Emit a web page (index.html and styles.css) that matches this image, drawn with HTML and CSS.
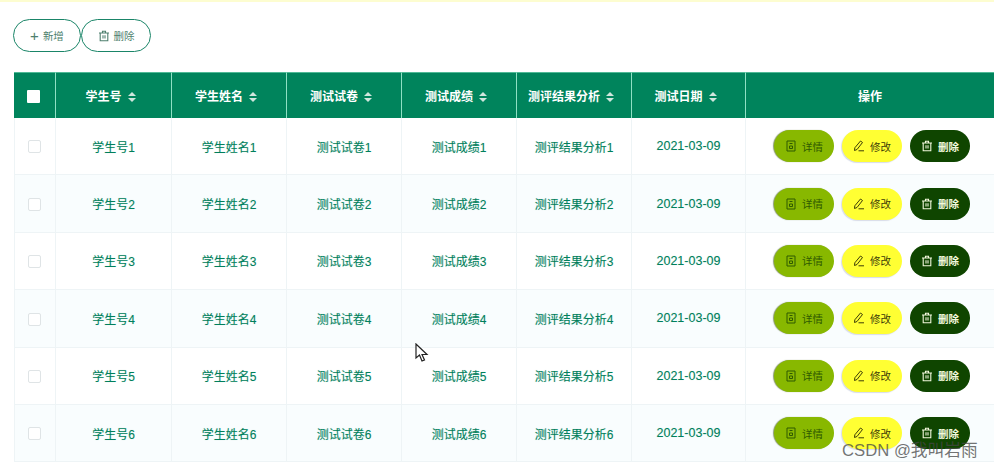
FILE: index.html
```html
<!DOCTYPE html>
<html lang="en">

<head>
    <meta charset="UTF-8">
    <meta name="viewport" content="width=device-width, initial-scale=1.0">
    <title>学生测试</title>
    <link rel="stylesheet" href="styles.css">
</head>

<body>
    <svg class="defs" width="0" height="0">
        <symbol id="i-trash" viewBox="0 0 12 12">
            <path d="M1 3h10M4.500 3V1.200h3V3M2.200 3v7.800h7.600V3M5 5.200v3.200M7 5.200v3.200" fill="none" stroke="currentColor" stroke-width="1.100"/>
        </symbol>
        <symbol id="i-doc" viewBox="0 0 12 12">
            <path d="M2 1h8v10H2zM4.500 3.500h3M4.500 6h3v2.500h-3z" fill="none" stroke="currentColor" stroke-width="1"/>
        </symbol>
        <symbol id="i-edit" viewBox="0 0 12 12">
            <path d="M7.500 1l2 1.500-5.500 7-2.500 1 .3-2.700zM5.500 10.800h5.500" fill="none" stroke="currentColor" stroke-width="1"/>
        </symbol>
    </svg>

    <div class="topline"></div>

    <div class="toolbar">
        <button class="tool-btn add"><span class="plus">+</span>新增</button>
        <button class="tool-btn"><svg class="ico"><use href="#i-trash"/></svg>删除</button>
    </div>

    <table class="list">
        <thead>
            <tr>
                <th class="c-check"><span class="check head"></span></th>
                <th class="c-col c-wide">学生号<i class="sort"></i></th>
                <th class="c-col">学生姓名<i class="sort"></i></th>
                <th class="c-col">测试试卷<i class="sort"></i></th>
                <th class="c-col">测试成绩<i class="sort"></i></th>
                <th class="c-col">测评结果分析<i class="sort"></i></th>
                <th class="c-col c-narrow">测试日期<i class="sort"></i></th>
                <th class="c-ops">操作</th>
            </tr>
        </thead>
        <tbody>
            <tr>
                <td class="c-check"><span class="check"></span></td>
                <td>学生号1</td><td>学生姓名1</td><td>测试试卷1</td><td>测试成绩1</td><td>测评结果分析1</td><td class="date">2021-03-09</td>
                <td><div class="ops">
                    <button class="op detail"><svg class="ico"><use href="#i-doc"/></svg>详情</button>
                    <button class="op edit"><svg class="ico"><use href="#i-edit"/></svg>修改</button>
                    <button class="op del"><svg class="ico"><use href="#i-trash"/></svg>删除</button>
                </div></td>
            </tr>
            <tr>
                <td class="c-check"><span class="check"></span></td>
                <td>学生号2</td><td>学生姓名2</td><td>测试试卷2</td><td>测试成绩2</td><td>测评结果分析2</td><td class="date">2021-03-09</td>
                <td><div class="ops">
                    <button class="op detail"><svg class="ico"><use href="#i-doc"/></svg>详情</button>
                    <button class="op edit"><svg class="ico"><use href="#i-edit"/></svg>修改</button>
                    <button class="op del"><svg class="ico"><use href="#i-trash"/></svg>删除</button>
                </div></td>
            </tr>
            <tr>
                <td class="c-check"><span class="check"></span></td>
                <td>学生号3</td><td>学生姓名3</td><td>测试试卷3</td><td>测试成绩3</td><td>测评结果分析3</td><td class="date">2021-03-09</td>
                <td><div class="ops">
                    <button class="op detail"><svg class="ico"><use href="#i-doc"/></svg>详情</button>
                    <button class="op edit"><svg class="ico"><use href="#i-edit"/></svg>修改</button>
                    <button class="op del"><svg class="ico"><use href="#i-trash"/></svg>删除</button>
                </div></td>
            </tr>
            <tr>
                <td class="c-check"><span class="check"></span></td>
                <td>学生号4</td><td>学生姓名4</td><td>测试试卷4</td><td>测试成绩4</td><td>测评结果分析4</td><td class="date">2021-03-09</td>
                <td><div class="ops">
                    <button class="op detail"><svg class="ico"><use href="#i-doc"/></svg>详情</button>
                    <button class="op edit"><svg class="ico"><use href="#i-edit"/></svg>修改</button>
                    <button class="op del"><svg class="ico"><use href="#i-trash"/></svg>删除</button>
                </div></td>
            </tr>
            <tr>
                <td class="c-check"><span class="check"></span></td>
                <td>学生号5</td><td>学生姓名5</td><td>测试试卷5</td><td>测试成绩5</td><td>测评结果分析5</td><td class="date">2021-03-09</td>
                <td><div class="ops">
                    <button class="op detail"><svg class="ico"><use href="#i-doc"/></svg>详情</button>
                    <button class="op edit"><svg class="ico"><use href="#i-edit"/></svg>修改</button>
                    <button class="op del"><svg class="ico"><use href="#i-trash"/></svg>删除</button>
                </div></td>
            </tr>
            <tr>
                <td class="c-check"><span class="check"></span></td>
                <td>学生号6</td><td>学生姓名6</td><td>测试试卷6</td><td>测试成绩6</td><td>测评结果分析6</td><td class="date">2021-03-09</td>
                <td><div class="ops">
                    <button class="op detail"><svg class="ico"><use href="#i-doc"/></svg>详情</button>
                    <button class="op edit"><svg class="ico"><use href="#i-edit"/></svg>修改</button>
                    <button class="op del"><svg class="ico"><use href="#i-trash"/></svg>删除</button>
                </div></td>
            </tr>
        </tbody>
    </table>

    <!-- mouse pointer and watermark sit on top of the table -->
    <svg class="cursor" width="14" height="20" viewBox="0 0 14 20">
        <path d="M1 1v14l3.500-3 2.500 6 2.500-1-2.500-5.500h5z" fill="#fff" stroke="#222" stroke-width="1.200"/>
    </svg>
    <div class="watermark">CSDN @我叫岩雨</div>
</body>

</html>
```

FILE: styles.css
```css
* {
    margin: 0;
    padding: 0;
    box-sizing: border-box;
}

html,
body {
    height: 469px;
    overflow: hidden;
}

body {
    position: relative;
    background: #fff;
    font-family: "Liberation Sans", "Noto Sans CJK SC", sans-serif;
    font-size: 12px;
    color: #007f5c;
}

button {
    font: inherit;
    cursor: pointer;
}

.defs {
    display: block;
    height: 0;
}

.topline {
    height: 2px;
    background: #fdfdd0;
}

.toolbar {
    display: flex;
    padding: 17px 0 0 13px;
    height: 70px;
}

.tool-btn {
    display: flex;
    align-items: center;
    justify-content: center;
    width: 70px;
    height: 33px;
    border: 1.500px solid #1a8568;
    border-radius: 17px;
    background: #fff;
    color: #4e7f6e;
    font-size: 10.500px;
}

.tool-btn.add {
    width: 68px;
}

.tool-btn .ico {
    margin-right: 4px;
}

.plus {
    margin-right: 4px;
    font-size: 15px;
    line-height: 1;
    font-weight: 300;
}

.ico {
    width: 12px;
    height: 12px;
    margin-right: 5px;
    flex: none;
}

.list {
    margin-left: 14px;
    width: 980px;
    border-collapse: separate;
    border-spacing: 0;
    table-layout: fixed;
}

.list th {
    height: 46px;
    background: #00845c;
    color: #fff;
    font-weight: bold;
    font-size: 12px;
    text-align: center;
    border-left: 1px solid #8fe0c4;
    border-top: 1px solid #4fb996;
}

.list th.c-col {
    padding-right: 6px;
}

.list th:first-child {
    border-left: 0;
}

.list .c-check {
    width: 41px;
    padding-right: 2px;
}

.c-col {
    width: 115px;
}

.c-wide {
    width: 116px;
}

.c-narrow {
    width: 114px;
}

.c-ops {
    width: 249px;
}

.sort {
    display: inline-block;
    position: relative;
    width: 8px;
    height: 10px;
    margin-left: 6px;
    vertical-align: -1px;
}

.sort::before,
.sort::after {
    content: "";
    position: absolute;
    left: 0;
    border-left: 4px solid transparent;
    border-right: 4px solid transparent;
}

.sort::before {
    top: 0;
    border-bottom: 4px solid #cfe6dd;
}

.sort::after {
    bottom: 0;
    border-top: 4px solid #cfe6dd;
}

.list td {
    height: 57.400px;
    text-align: center;
    border-left: 1px solid #eef4f6;
    border-bottom: 1px solid #eef4f6;
    text-shadow: 0 0 1px rgba(0, 127, 92, 0.25);
}

.list td.date {
    font-size: 12.500px;
}

.list tbody tr:nth-child(even) td {
    background: #f9fdfe;
}

.check {
    display: inline-block;
    width: 13px;
    height: 13px;
    border: 1px solid #dfe4e6;
    border-radius: 2px;
    background: #fff;
    vertical-align: middle;
}

.check.head {
    border: 0;
    border-radius: 1px;
}

.ops {
    display: flex;
    gap: 8px;
    padding-left: 28px;
}

.op {
    display: flex;
    align-items: center;
    justify-content: center;
    width: 60px;
    height: 32px;
    border: 0;
    border-radius: 16px;
    font-size: 10.500px;
}

.detail {
    background: #88b800;
    color: #2f5a00;
    box-shadow: -1px 0 1px #8a9a70;
}

.edit {
    background: #ffff33;
    color: #3c3c08;
    box-shadow: -1px 1px 1px #d8dce8;
}

.del {
    background: #0f4500;
    color: #f2f8dc;
    font-weight: bold;
}

.cursor {
    position: absolute;
    left: 415px;
    top: 343px;
}

.watermark {
    position: absolute;
    left: 842px;
    top: 441px;
    font-size: 16.700px;
    line-height: 20px;
    color: rgba(70, 70, 70, 0.75);
    white-space: nowrap;
}
```
